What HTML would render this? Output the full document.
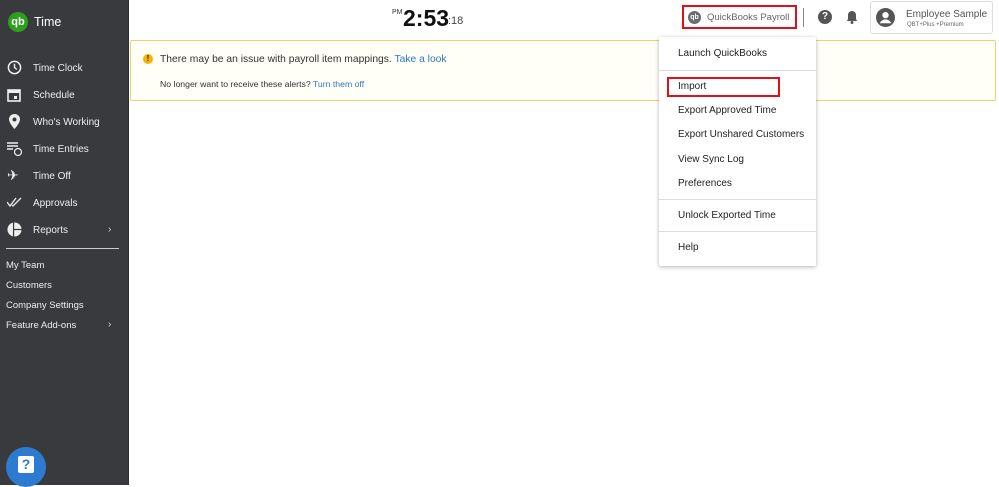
<!DOCTYPE html>
<html><head><style>
*{margin:0;padding:0;box-sizing:border-box}
body{width:999px;height:485px;overflow:hidden;font-family:"Liberation Sans",sans-serif;background:#fff;position:relative}
.sb{position:absolute;left:0;top:0;width:129px;height:485px;background:#393a3d;color:#fff;border-right:1px solid #2c2d30}
.abs{position:absolute}
.nav{position:absolute;left:33px;font-size:10px;color:#eceef1}
.ic{position:absolute;left:7px}
.sub{position:absolute;left:6px;font-size:9.5px;color:#eceef1}
.chev{position:absolute;left:108px;font-size:10px;color:#ddd}
.menu{position:absolute;left:659px;top:37px;width:157px;height:229px;background:#fff;box-shadow:0 1px 4px rgba(0,0,0,.3);border-radius:2px}
.mi{position:absolute;left:19px;font-size:10px;color:#222}
.hr{position:absolute;left:0;width:157px;height:1px;background:#ddd}
</style></head><body>
<div class="sb">
  <div class="abs" style="left:8px;top:12px;width:20px;height:20px;border-radius:50%;background:#2ca01c;color:#fff;font-size:11px;font-weight:bold;text-align:center;line-height:20px">qb</div>
  <div class="abs" style="left:34px;top:15px;font-size:12.5px;color:#fff">Time</div>
  <svg class="ic" style="top:60px" width="15" height="15" viewBox="0 0 16 16"><circle cx="8" cy="8" r="6.5" fill="none" stroke="#eee" stroke-width="1.6"/><path d="M8 4v4l2.5 2" stroke="#eee" stroke-width="1.5" fill="none"/></svg>
  <div class="nav" style="top:63px">Time Clock</div>
  <svg class="ic" style="top:88px" width="14" height="14" viewBox="0 0 14 14"><rect x="1" y="2" width="12" height="11" fill="none" stroke="#eee" stroke-width="1.6"/><rect x="1" y="2" width="12" height="3" fill="#eee"/><rect x="7" y="8" width="3" height="3" fill="#eee"/></svg>
  <div class="nav" style="top:90px">Schedule</div>
  <svg class="ic" style="top:114px;left:9px" width="11" height="15" viewBox="0 0 11 15"><path d="M5.5 0C2.5 0 0 2.3 0 5.3 0 9 5.5 15 5.5 15S11 9 11 5.3C11 2.3 8.5 0 5.5 0z" fill="#eee"/><circle cx="5.5" cy="5.5" r="2" fill="#393a3d"/></svg>
  <div class="nav" style="top:117px">Who's Working</div>
  <svg class="ic" style="top:141px" width="16" height="16" viewBox="0 0 16 16"><path d="M0 2h11M0 5h11M0 8h6" stroke="#eee" stroke-width="1.5"/><circle cx="11" cy="11" r="3.5" fill="none" stroke="#eee" stroke-width="1.2"/></svg>
  <div class="nav" style="top:144px">Time Entries</div>
  <div class="abs" style="left:7px;top:167px;font-size:14px;color:#eee">✈</div>
  <div class="nav" style="top:171px">Time Off</div>
  <svg class="ic" style="top:197px" width="16" height="10" viewBox="0 0 16 10"><path d="M0 5l3 4 6-8M5 8l1 1 8-8" stroke="#eee" stroke-width="1.3" fill="none"/></svg>
  <div class="nav" style="top:198px">Approvals</div>
  <svg class="ic" style="top:222px" width="15" height="15" viewBox="0 0 16 16"><circle cx="8" cy="8" r="7.5" fill="#eee"/><path d="M7 0v16M7 8h9" stroke="#393a3d" stroke-width="1.3"/></svg>
  <div class="nav" style="top:225px">Reports</div>
  <div class="chev" style="top:224px">›</div>
  <div class="abs" style="left:6px;top:248px;width:113px;height:1px;background:#ccc"></div>
  <div class="sub" style="top:260px">My Team</div>
  <div class="sub" style="top:280px">Customers</div>
  <div class="sub" style="top:300px">Company Settings</div>
  <div class="sub" style="top:320px">Feature Add-ons</div>
  <div class="chev" style="top:319px">›</div>
  <div class="abs" style="left:6px;top:447px;width:40px;height:40px;border-radius:50%;background:#2d7bd0"></div>
  <div class="abs" style="left:18px;top:456px;width:16px;height:17px;background:#fff;border-radius:2px;color:#2d7bd0;font-weight:bold;font-size:14px;text-align:center;line-height:17px">?</div>
</div>
<div class="abs" style="left:130px;top:0;width:869px;height:40px;background:#fff"></div>
<div class="abs" style="left:392px;top:9px;font-size:7px;color:#333">PM</div>
<div class="abs" style="left:403px;top:5px;font-size:23px;font-weight:bold;color:#111">2:53</div>
<div class="abs" style="left:448px;top:15px;font-size:11px;color:#444">:18</div>
<div class="abs" style="left:130px;top:40px;width:866px;height:61px;border:1px solid #e8d46e;background:#fffef7;border-radius:2px"></div>
<div class="abs" style="left:143px;top:54px;width:10px;height:10px;border-radius:50%;background:#f4b400;color:#222;font-size:8px;font-weight:bold;text-align:center;line-height:10px">!</div>
<div class="abs" style="left:160px;top:54px;font-size:10.3px;color:#333">There may be an issue with payroll item mappings. <span style="color:#2e7bc2">Take a look</span></div>
<div class="abs" style="left:160px;top:79px;font-size:8.7px;color:#333">No longer want to receive these alerts? <span style="color:#2e7bc2">Turn them off</span></div>
<div class="abs" style="left:682px;top:5px;width:115px;height:24px;border:2px solid #e0101a"></div>
<div class="abs" style="left:688px;top:11px;width:13px;height:13px;border-radius:50%;background:#6b6c72;color:#fff;font-size:7px;font-weight:bold;text-align:center;line-height:13px">qb</div>
<div class="abs" style="left:707px;top:12px;font-size:9.5px;color:#666">QuickBooks Payroll</div>
<div class="abs" style="left:803px;top:8px;width:1px;height:19px;background:#888"></div>
<div class="abs" style="left:818px;top:10px;width:14px;height:14px;border-radius:50%;background:#555;color:#fff;font-size:10px;font-weight:bold;text-align:center;line-height:14px">?</div>
<svg class="abs" style="left:846px;top:10px" width="12" height="14" viewBox="0 0 12 14"><path d="M6 1c-2.5 0-4 2-4 4v4L1 11h10L10 9V5c0-2-1.5-4-4-4z" fill="#555"/><circle cx="6" cy="12.5" r="1.5" fill="#555"/></svg>
<div class="abs" style="left:870px;top:1px;width:123px;height:33px;border:1px solid #ddd;border-radius:3px;background:#fff"></div>
<svg class="abs" style="left:876px;top:8px" width="19" height="19" viewBox="0 0 20 20"><circle cx="10" cy="10" r="10" fill="#555"/><circle cx="10" cy="7.5" r="3.3" fill="#fff"/><path d="M4 16c1.5-3 4-4 6-4s4.5 1 6 4" fill="#fff"/></svg>
<div class="abs" style="left:906px;top:9px;font-size:10px;color:#555">Employee Sample</div>
<div class="abs" style="left:907px;top:22px;font-size:6px;color:#666">QBT+Plus +Premium</div>
<div class="menu">
  <div class="mi" style="top:11px">Launch QuickBooks</div>
  <div class="hr" style="top:33px"></div>
  <div class="mi" style="top:44px">Import</div>
  <div class="mi" style="top:68px">Export Approved Time</div>
  <div class="mi" style="top:92px">Export Unshared Customers</div>
  <div class="mi" style="top:117px">View Sync Log</div>
  <div class="mi" style="top:141px">Preferences</div>
  <div class="hr" style="top:162px"></div>
  <div class="mi" style="top:173px">Unlock Exported Time</div>
  <div class="hr" style="top:194px"></div>
  <div class="mi" style="top:205px">Help</div>
</div>
<div class="abs" style="left:667px;top:77px;width:113px;height:20px;border:2px solid #e0101a"></div>
</body></html>
